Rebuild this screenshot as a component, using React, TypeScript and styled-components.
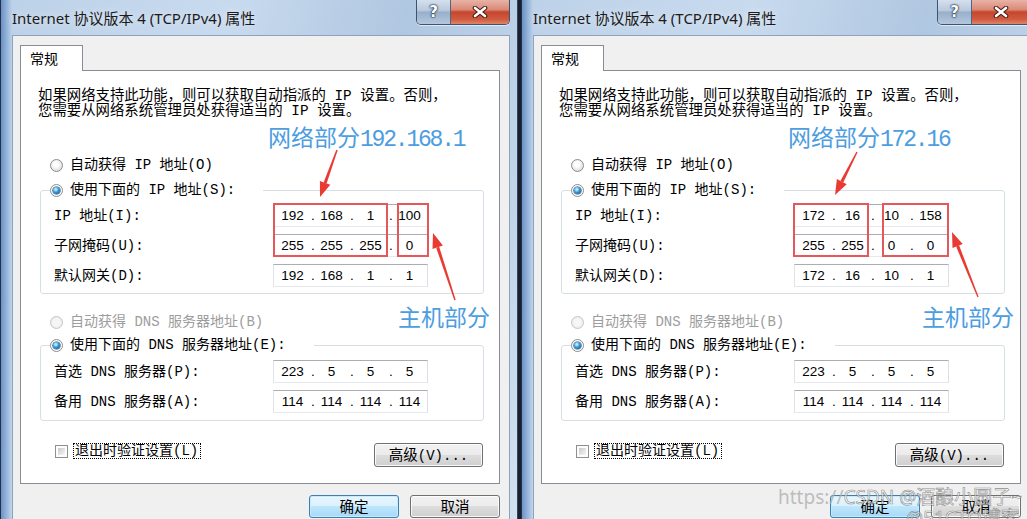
import React from "react";
import styled, { createGlobalStyle, css } from "styled-components";

// SimSun-like dialog text: monospace Latin, CJK from Noto
const SIM = `"Liberation Mono", "Noto Sans CJK SC", monospace`;
const UI = `"Noto Sans CJK SC", "Noto Sans", sans-serif`;

type Quad = [string, string, string, string];

interface Mark {
  x: number;
  y: number;
  w: number;
  h: number;
}

interface DialogProps {
  ip: Quad;
  mask: Quad;
  gateway: Quad;
  netLabel: string;
  netX: number;
  hostX: number;
  marks: Mark[];
  arrows: [number, number, number, number][];
}

const GlobalStyle = createGlobalStyle`
  html, body {
    margin: 0;
    padding: 0;
    background: #17202c;
  }
  #root {
    width: 1027px;
    height: 519px;
  }
`;

const Desktop = styled.div`
  position: relative;
  display: flex;
  gap: 3px;
  width: 1027px;
  height: 519px;
  overflow: hidden;
  background: #17202c;
`;

const Window = styled.div`
  position: relative;
  flex: 0 0 518px;
  height: 540px;
  box-sizing: border-box;
  padding: 0 8px 0 12px;
  display: flex;
  flex-direction: column;
  background:
    linear-gradient(90deg, rgba(38, 92, 168, 0.6) 0, rgba(120, 160, 212, 0.35) 9px, rgba(255, 255, 255, 0) 12px),
    linear-gradient(105deg, #bcd1e8 0%, #c8daee 35%, #b0c7e1 62%, #c1d5ea 86%, #d4e2f0 100%);
  box-shadow: inset 1px 0 0 #22304a, inset -1px 0 0 #34465f;
`;

const TitleBar = styled.div`
  flex: none;
  height: 35px;
  display: flex;
  justify-content: space-between;
  align-items: flex-start;
`;

const Title = styled.div`
  margin-top: 8px;
  font: 15px/20px "Noto Sans", "Noto Sans CJK SC", sans-serif;
  color: #1b1b1b;
  white-space: nowrap;
  text-shadow: 0 0 8px rgba(255, 255, 255, 0.7);
`;

const CaptionButtons = styled.div`
  display: flex;
  height: 24px;
  border: 1px solid #3e536f;
  border-top: none;
  border-radius: 0 0 5px 5px;
  overflow: hidden;
  box-shadow: 0 1px 0 rgba(255, 255, 255, 0.6);
`;

const HelpButton = styled.div`
  width: 33px;
  display: flex;
  align-items: center;
  justify-content: center;
  border-right: 1px solid #52657f;
  background: linear-gradient(180deg, #d5e0ee 0%, #b8c8dc 45%, #98afca 50%, #b3c7de 100%);
  color: #fff;
  font: bold 15px/1 "DejaVu Sans", sans-serif;
  text-shadow: 0 0 1px #23334a, 0 0 2px #23334a, 0 0 2px #23334a;
`;

const CloseButton = styled.div`
  width: 58px;
  display: flex;
  align-items: center;
  justify-content: center;
  background: linear-gradient(180deg, #e9b3a7 0%, #d98a78 40%, #c6462c 50%, #cf5a40 80%, #df8468 100%);
`;

const Client = styled.div`
  flex: 1;
  box-sizing: border-box;
  padding: 9px 9px 0 7px;
  background: #f0f0f0;
  border: 1px solid #8da2bb;
  border-bottom: none;
  display: flex;
  flex-direction: column;
`;

const TabStrip = styled.div`
  display: flex;
`;

const Tab = styled.div`
  position: relative;
  z-index: 1;
  box-sizing: border-box;
  width: 63px;
  height: 26px;
  margin-bottom: -1px;
  padding-left: 9px;
  background: #fff;
  border: 1px solid #898c95;
  border-bottom: none;
  font: 14px/24px ${UI};
  color: #000;
`;

const Panel = styled.div`
  box-sizing: border-box;
  height: 414px;
  padding: 0 15px 0 19px;
  background: #fff;
  border: 1px solid #898c95;
  display: flex;
  flex-direction: column;
`;

const Intro = styled.p`
  margin: 18px 0 0 -2px;
  font: 14.4px/15px ${SIM};
  color: #000;
  white-space: nowrap;
`;

const Option = styled.label<{ $disabled?: boolean }>`
  display: flex;
  align-items: center;
  gap: 7px;
  height: 16px;
  font: 14px/16px ${SIM};
  color: ${(p) => (p.$disabled ? "#9d9d9d" : "#000")};
  white-space: nowrap;
`;

const LooseOption = styled(Option)<{ $top: number }>`
  margin: ${(p) => p.$top}px 0 0 10px;
`;

const Radio = styled.span<{ $checked?: boolean; $disabled?: boolean }>`
  position: relative;
  flex: none;
  box-sizing: border-box;
  width: 13px;
  height: 13px;
  border-radius: 50%;
  border: 1px solid ${(p) => (p.$disabled ? "#c6c6c6" : "#8c8c8c")};
  background: ${(p) =>
    p.$disabled
      ? "radial-gradient(circle at 50% 50%, #f6f6f6 0 40%, #e4e4e4 100%)"
      : "radial-gradient(circle at 45% 40%, #ffffff 0 25%, #dedede 75%, #cbcbcb 100%)"};
  ${(p) =>
    p.$checked &&
    css`
      background: #fff;
      &::after {
        content: "";
        position: absolute;
        inset: 2px;
        border-radius: 50%;
        background: radial-gradient(circle at 40% 35%, #b4ecff 0 12%, #3697d6 45%, #104f8a 90%);
        box-shadow: 0 0 0 0.6px #1b4a73;
      }
    `}
`;

const Group = styled.fieldset<{ $top: number; $pad: number }>`
  margin: ${(p) => p.$top}px 0 0;
  padding: ${(p) => p.$pad}px 13px ${(p) => p.$pad}px;
  border: 1px solid #d5dfe5;
  border-radius: 3px;
  min-inline-size: 0;
`;

const Legend = styled.legend`
  margin-left: -4px;
  padding: 0 28px 0 0;
  height: 16px;
`;

const Rows = styled.div`
  display: flex;
  flex-direction: column;
  gap: 7px;
`;

const FieldRow = styled.div`
  display: grid;
  grid-template-columns: 219px 155px;
  align-items: center;
  height: 23px;
  font: 14px/16px ${SIM};
  color: #000;
  white-space: nowrap;
`;

const IpBox = styled.div`
  box-sizing: border-box;
  height: 23px;
  display: grid;
  grid-template-columns: 31px 8px 31px 8px 31px 8px 31px;
  align-items: center;
  padding: 0 2px 0 3px;
  background: #fff;
  border: 1px solid #e3e9ef;
  border-top-color: #abadb3;
  border-left-color: #e2e3ea;
  border-right-color: #dbdfe6;
  font: 13.5px/21px "Liberation Sans", Arial, sans-serif;
  color: #000;
`;

const Octet = styled.span`
  text-align: center;
`;

const Dot = styled.span`
  text-align: center;
  padding-left: 2px;
`;

const BottomRow = styled.div`
  margin: 22px 1px 0 15px;
  display: flex;
  justify-content: space-between;
  align-items: flex-start;
`;

const CheckOption = styled.label`
  display: flex;
  align-items: center;
  gap: 5px;
  height: 16px;
`;

const CheckBox = styled.span`
  flex: none;
  box-sizing: border-box;
  width: 13px;
  height: 13px;
  padding: 2px;
  border: 1px solid #8e8f8f;
  background: linear-gradient(135deg, #c9c9c9, #f7f7f7) content-box, #fdfdfd;
`;

const FocusText = styled.span`
  box-sizing: border-box;
  height: 16px;
  padding: 0 2px 0 1px;
  border: 1px dotted #000;
  font: 14px/14px ${SIM};
  color: #000;
  white-space: nowrap;
`;

const WinButton = styled.button<{ $w: number; $h?: number; $default?: boolean }>`
  box-sizing: border-box;
  width: ${(p) => p.$w}px;
  height: ${(p) => p.$h ?? 23}px;
  padding: 0;
  border-radius: 3px;
  border: 1px solid ${(p) => (p.$default ? "#3c7fb1" : "#707070")};
  background: ${(p) =>
    p.$default
      ? "linear-gradient(180deg, #eaf6fd 0%, #d9f0fc 50%, #bee6fd 50%, #a7d9f5 100%)"
      : "linear-gradient(180deg, #f2f2f2 0%, #ebebeb 50%, #dddddd 50%, #cfcfcf 100%)"};
  box-shadow: inset 0 0 0 1px ${(p) => (p.$default ? "#c4ecfd" : "rgba(255, 255, 255, 0.85)")};
  font: 14.5px/1 ${UI};
  color: #000;
`;

const AdvancedLabel = styled.span`
  font: 14px/1 ${SIM};
`;

const Footer = styled.div`
  margin-top: 11px;
  display: flex;
  justify-content: flex-end;
  gap: 11px;
`;

/* annotation layer drawn over the dialog */

const Note = styled.div<{ $x: number; $y: number }>`
  position: absolute;
  left: ${(p) => p.$x}px;
  top: ${(p) => p.$y}px;
  font: 23px/26px "Noto Sans CJK SC", sans-serif;
  color: #4d9de0;
  white-space: nowrap;
  pointer-events: none;
`;

const NoteDigits = styled.span`
  font-family: "Liberation Mono", monospace;
  letter-spacing: -2.2px;
`;

const MarkBox = styled.div<{ $x: number; $y: number; $w: number; $h: number }>`
  position: absolute;
  left: ${(p) => p.$x}px;
  top: ${(p) => p.$y}px;
  width: ${(p) => p.$w}px;
  height: ${(p) => p.$h}px;
  box-sizing: border-box;
  border: 2px solid #e5575a;
  pointer-events: none;
`;

const ArrowLayer = styled.svg`
  position: absolute;
  left: 0;
  top: 0;
  width: 100%;
  height: 100%;
  overflow: visible;
  pointer-events: none;
`;

const Watermark = styled.div`
  position: absolute;
  left: 778px;
  top: 486px;
  font: 19px/22px "Noto Sans", "Noto Sans CJK SC", sans-serif;
  white-space: nowrap;
  color: rgba(255, 255, 255, 0.6);
  -webkit-text-stroke: 0.6px rgba(105, 105, 105, 0.75);
`;

const WatermarkUrl = styled.span`
  color: rgba(175, 175, 175, 0.8);
  -webkit-text-stroke: 0;
`;

const WatermarkSub = styled(Watermark)`
  left: 906px;
  top: 507px;
`;

const arrowShape = (x1: number, y1: number, x2: number, y2: number) => {
  const len = 15;
  const half = 5.5;
  const d = Math.hypot(x2 - x1, y2 - y1);
  const ux = (x2 - x1) / d;
  const uy = (y2 - y1) / d;
  const px = -uy;
  const py = ux;
  const bx = x2 - ux * len;
  const by = y2 - uy * len;
  const shaft = [
    [x1 + px * 0.7, y1 + py * 0.7],
    [bx + px * 1.6, by + py * 1.6],
    [bx - px * 1.6, by - py * 1.6],
    [x1 - px * 0.7, y1 - py * 0.7],
  ];
  const head = [
    [x2, y2],
    [bx + px * half, by + py * half],
    [bx - px * half, by - py * half],
  ];
  const pts = (a: number[][]) => a.map(([x, y]) => `${x.toFixed(1)},${y.toFixed(1)}`).join(" ");
  return { shaft: pts(shaft), head: pts(head) };
};

const IpField = ({ value }: { value: Quad }) => (
  <IpBox>
    <Octet>{value[0]}</Octet>
    <Dot>.</Dot>
    <Octet>{value[1]}</Octet>
    <Dot>.</Dot>
    <Octet>{value[2]}</Octet>
    <Dot>.</Dot>
    <Octet>{value[3]}</Octet>
  </IpBox>
);

const Dialog = ({ ip, mask, gateway, netLabel, netX, hostX, marks, arrows }: DialogProps) => (
  <Window>
    <TitleBar>
      <Title>Internet 协议版本 4 (TCP/IPv4) 属性</Title>
      <CaptionButtons>
        <HelpButton>?</HelpButton>
        <CloseButton>
          <svg width="20" height="12" viewBox="0 0 20 12">
            <path d="M5 2 L15 10 M15 2 L5 10" stroke="#4a1a12" strokeWidth="4.6" strokeLinecap="round" />
            <path d="M5 2 L15 10 M15 2 L5 10" stroke="#ffffff" strokeWidth="2.6" strokeLinecap="round" />
          </svg>
        </CloseButton>
      </CaptionButtons>
    </TitleBar>

    <Client>
      <TabStrip>
        <Tab>常规</Tab>
      </TabStrip>
      <Panel>
        <Intro>
          如果网络支持此功能，则可以获取自动指派的 IP 设置。否则，
          <br />
          您需要从网络系统管理员处获得适当的 IP 设置。
        </Intro>

        <LooseOption $top={38}>
          <Radio />
          自动获得 IP 地址(O)
        </LooseOption>
        <Group $top={9} $pad={6}>
          <Legend>
            <Option>
              <Radio $checked />
              使用下面的 IP 地址(S):
            </Option>
          </Legend>
          <Rows>
            <FieldRow>
              <span>IP 地址(I):</span>
              <IpField value={ip} />
            </FieldRow>
            <FieldRow>
              <span>子网掩码(U):</span>
              <IpField value={mask} />
            </FieldRow>
            <FieldRow>
              <span>默认网关(D):</span>
              <IpField value={gateway} />
            </FieldRow>
          </Rows>
        </Group>

        <LooseOption $top={20} $disabled>
          <Radio $disabled />
          自动获得 DNS 服务器地址(B)
        </LooseOption>
        <Group $top={7} $pad={7}>
          <Legend>
            <Option>
              <Radio $checked />
              使用下面的 DNS 服务器地址(E):
            </Option>
          </Legend>
          <Rows>
            <FieldRow>
              <span>首选 DNS 服务器(P):</span>
              <IpField value={["223", "5", "5", "5"]} />
            </FieldRow>
            <FieldRow>
              <span>备用 DNS 服务器(A):</span>
              <IpField value={["114", "114", "114", "114"]} />
            </FieldRow>
          </Rows>
        </Group>

        <BottomRow>
          <CheckOption>
            <CheckBox />
            <FocusText>退出时验证设置(L)</FocusText>
          </CheckOption>
          <WinButton $w={109} $h={24}>
            高级<AdvancedLabel>(V)...</AdvancedLabel>
          </WinButton>
        </BottomRow>
      </Panel>
      <Footer>
        <WinButton $w={90} $default>
          确定
        </WinButton>
        <WinButton $w={90}>取消</WinButton>
      </Footer>
    </Client>

    <Note $x={netX} $y={123}>
      网络部分<NoteDigits>{netLabel}</NoteDigits>
    </Note>
    <Note $x={hostX} $y={303}>
      主机部分
    </Note>
    {marks.map((m, i) => (
      <MarkBox key={i} $x={m.x} $y={m.y} $w={m.w} $h={m.h} />
    ))}
    <ArrowLayer>
      {arrows.map(([x1, y1, x2, y2], i) => {
        const a = arrowShape(x1, y1, x2, y2);
        return (
          <g key={i} fill="#ea3b32">
            <polygon points={a.shaft} />
            <polygon points={a.head} />
          </g>
        );
      })}
    </ArrowLayer>
  </Window>
);

export default function App() {
  return (
    <>
      <GlobalStyle />
      <Desktop>
        <Dialog
          ip={["192", "168", "1", "100"]}
          mask={["255", "255", "255", "0"]}
          gateway={["192", "168", "1", "1"]}
          netLabel="192.168.1"
          netX={268}
          hostX={398}
          marks={[
            { x: 273, y: 203, w: 115, h: 54 },
            { x: 397, y: 203, w: 32, h: 54 },
          ]}
          arrows={[
            [337, 150, 320, 197],
            [455, 300, 433, 233],
          ]}
        />
        <Dialog
          ip={["172", "16", "10", "158"]}
          mask={["255", "255", "0", "0"]}
          gateway={["172", "16", "10", "1"]}
          netLabel="172.16"
          netX={267}
          hostX={401}
          marks={[
            { x: 272, y: 203, w: 76, h: 54 },
            { x: 361, y: 203, w: 67, h: 54 },
          ]}
          arrows={[
            [336, 152, 314, 195],
            [457, 297, 431, 232],
          ]}
        />
        <Watermark>
          <WatermarkUrl>https://</WatermarkUrl>CSDN @酒酿小圆子~
        </Watermark>
        <WatermarkSub>@51CTO博客</WatermarkSub>
      </Desktop>
    </>
  );
}
